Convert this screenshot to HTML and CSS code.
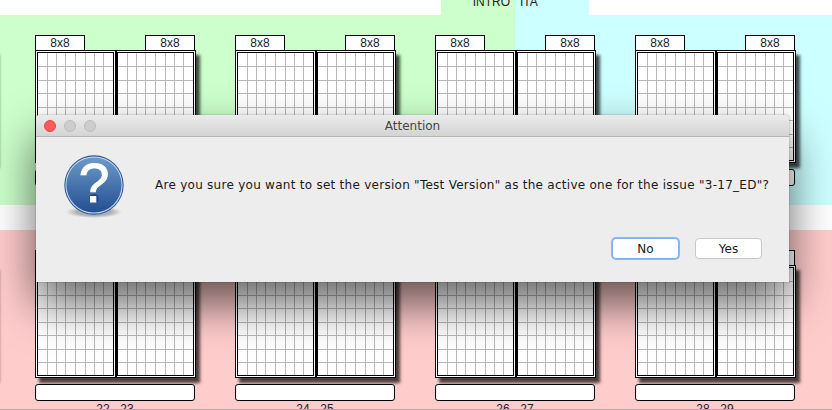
FILE: index.html
```html
<!DOCTYPE html>
<html lang="en">
<head>
    <meta charset="UTF-8">
    <title>Attention</title>
    <link rel="stylesheet" href="styles.css">
</head>
<body>

    <svg class="defs" width="0" height="0">
        <symbol id="grid" viewBox="0 0 77 109">
            <path class="grid-lines" d="M10.5 0V109M19.5 0V109M28.5 0V109M38.5 0V109M48.5 0V109M57.5 0V109M66.5 0V109M0 14.5H77M0 28.5H77M0 41.5H77M0 55.5H77M0 68.5H77M0 82.5H77M0 95.5H77"/>
            <rect class="grid-frame" x="0.5" y="0.5" width="76" height="108"/>
        </symbol>
    </svg>

    <!-- Section header -->
    <div class="topbar">
        <div class="topbar-cell intro">INTRO</div>
        <div class="topbar-cell ita">ITA</div>
    </div>

    <!-- Upper row -->
    <div class="section section-upper">
        <div class="spreads">
            <div class="spread spread-prev">
                <div class="pages">
                    <div class="page"><svg class="grid"><use href="#grid"/></svg></div>
                    <div class="page"><svg class="grid"><use href="#grid"/></svg></div>
                </div>
            </div>
            <div class="spread">
                <div class="tabs"><span class="tab">8x8</span><span class="tab">8x8</span></div>
                <div class="pages">
                    <div class="page"><svg class="grid"><use href="#grid"/></svg></div>
                    <div class="page"><svg class="grid"><use href="#grid"/></svg></div>
                </div>
                <div class="name"></div>
            </div>
            <div class="spread">
                <div class="tabs"><span class="tab">8x8</span><span class="tab">8x8</span></div>
                <div class="pages">
                    <div class="page"><svg class="grid"><use href="#grid"/></svg></div>
                    <div class="page"><svg class="grid"><use href="#grid"/></svg></div>
                </div>
                <div class="name"></div>
            </div>
            <div class="spread">
                <div class="tabs"><span class="tab">8x8</span><span class="tab">8x8</span></div>
                <div class="pages">
                    <div class="page"><svg class="grid"><use href="#grid"/></svg></div>
                    <div class="page"><svg class="grid"><use href="#grid"/></svg></div>
                </div>
                <div class="name"></div>
            </div>
            <div class="spread">
                <div class="tabs"><span class="tab">8x8</span><span class="tab">8x8</span></div>
                <div class="pages">
                    <div class="page"><svg class="grid"><use href="#grid"/></svg></div>
                    <div class="page"><svg class="grid"><use href="#grid"/></svg></div>
                </div>
                <div class="name"></div>
            </div>
        </div>
    </div>

    <div class="divider"></div>

    <!-- Lower row -->
    <div class="section section-lower">
        <div class="spreads">
            <div class="spread spread-prev">
                <div class="pages">
                    <div class="page"><svg class="grid"><use href="#grid"/></svg></div>
                    <div class="page"><svg class="grid"><use href="#grid"/></svg></div>
                </div>
            </div>
            <div class="spread">
                <div class="tabs"><span class="tab">8x8</span><span class="tab">8x8</span></div>
                <div class="pages">
                    <div class="page"><svg class="grid"><use href="#grid"/></svg></div>
                    <div class="page"><svg class="grid"><use href="#grid"/></svg></div>
                </div>
                <div class="name"></div>
                <div class="number">22 - 23</div>
            </div>
            <div class="spread">
                <div class="tabs"><span class="tab">8x8</span><span class="tab">8x8</span></div>
                <div class="pages">
                    <div class="page"><svg class="grid"><use href="#grid"/></svg></div>
                    <div class="page"><svg class="grid"><use href="#grid"/></svg></div>
                </div>
                <div class="name"></div>
                <div class="number">24 - 25</div>
            </div>
            <div class="spread">
                <div class="tabs"><span class="tab">8x8</span><span class="tab">8x8</span></div>
                <div class="pages">
                    <div class="page"><svg class="grid"><use href="#grid"/></svg></div>
                    <div class="page"><svg class="grid"><use href="#grid"/></svg></div>
                </div>
                <div class="name"></div>
                <div class="number">26 - 27</div>
            </div>
            <div class="spread">
                <div class="tabs"><span class="tab">8x8</span><span class="tab">8x8</span></div>
                <div class="pages">
                    <div class="page"><svg class="grid"><use href="#grid"/></svg></div>
                    <div class="page"><svg class="grid"><use href="#grid"/></svg></div>
                </div>
                <div class="name"></div>
                <div class="number">28 - 29</div>
            </div>
        </div>
    </div>

    <div class="footer-line"></div>

    <!-- Dialog -->
    <div class="dialog">
        <div class="titlebar">
            <div class="lights">
                <span class="light light-close"></span>
                <span class="light"></span>
                <span class="light"></span>
            </div>
            <div class="title">Attention</div>
        </div>
        <div class="dialog-body">
            <svg class="question" width="64" height="68" viewBox="0 0 64 68">
                <defs>
                    <radialGradient id="dropShadow" cx="0.5" cy="0.5" r="0.5">
                        <stop offset="0.6" stop-color="#000" stop-opacity="0.26"/>
                        <stop offset="1" stop-color="#000" stop-opacity="0"/>
                    </radialGradient>
                    <linearGradient id="ball" x1="0" y1="0" x2="0" y2="1">
                        <stop offset="0" stop-color="#6d9ac9"/>
                        <stop offset="1" stop-color="#234f92"/>
                    </linearGradient>
                </defs>
                <ellipse cx="32" cy="57" rx="28" ry="6" fill="url(#dropShadow)"/>
                <circle cx="32" cy="30" r="29.7" fill="#2b5a9c"/>
                <circle cx="32" cy="30" r="28.6" fill="#c9d8ea"/>
                <circle cx="32" cy="30" r="27.6" fill="url(#ball)"/>
                <circle cx="32" cy="43.5" r="4.6" fill="#1c4687"/>
                <text class="question-mark" x="32" y="47" text-anchor="middle">?</text>
            </svg>
            <div class="message">Are you sure you want to set the version "Test Version" as the active one for the issue "3-17_ED"?</div>
        </div>
        <div class="buttons">
            <button class="btn btn-focus" type="button">No</button>
            <button class="btn" type="button">Yes</button>
        </div>
    </div>

</body>
</html>
```

FILE: styles.css
```css
html, body {
    margin: 0;
    padding: 0;
}

body {
    position: relative;
    width: 832px;
    height: 410px;
    overflow: hidden;
    background-color: #fff;
    font-family: 'Liberation Sans', sans-serif;
    font-size: 12px;
    color: #222;
}

.defs {
    position: absolute;
}

/* top header */
.topbar {
    display: flex;
    width: 148px;
    height: 15px;
    margin-left: 441px;
    overflow: hidden;
    line-height: 4px;
}

.topbar-cell {
    width: 74px;
    box-sizing: border-box;
}

.intro {
    background-color: #ccffcc;
    text-align: right;
    padding-right: 5px;
}

.ita {
    background-color: #ccffff;
    padding-left: 5px;
}

/* rows of spreads */
.section {
    box-sizing: border-box;
    overflow: hidden;
    padding-top: 20px;
}

.section-upper {
    height: 190px;
    background: linear-gradient(90deg, #ccffcc 515px, #ccffff 515px);
}

.section-lower {
    height: 179px;
    background-color: #ffcccc;
}

.divider {
    height: 25px;
}

.footer-line {
    height: 1px;
    background-color: #aaa;
}

.spreads {
    display: flex;
    gap: 40px;
    margin-left: -165px;
}

.spread {
    flex: 0 0 160px;
    min-width: 0;
}

.spread-prev {
    padding-top: 15px;
}

.spread-prev .pages {
    width: 160px;
}

.tabs {
    display: flex;
    justify-content: space-between;
}

.tab {
    box-sizing: border-box;
    width: 50px;
    height: 16px;
    margin-bottom: -1px;
    background-color: #fff;
    border: 1px solid #000;
    text-align: center;
    line-height: 14px;
}

.pages {
    display: flex;
    width: 161px;
    box-shadow: 4px 5px 3px rgba(0, 0, 0, 0.7);
}

.page {
    box-sizing: border-box;
    display: flex;
    flex: none;
    width: 81px;
    height: 113px;
    padding: 1px;
    background-color: #fff;
    border: 1px solid #000;
}

.page + .page {
    width: 80px;
    padding-left: 0;
}

.grid {
    flex: none;
    width: 77px;
    height: 109px;
}

.grid-lines {
    fill: none;
    stroke: #b8b8b8;
    stroke-width: 1;
    shape-rendering: crispEdges;
}

.grid-frame {
    fill: none;
    stroke: #000;
    stroke-width: 1;
    shape-rendering: crispEdges;
}

.name {
    box-sizing: border-box;
    height: 17px;
    margin-top: 6px;
    background-color: #fff;
    border: 1px solid #000;
    border-radius: 3px;
}

.number {
    text-align: center;
    line-height: 14px;
    margin-top: 1px;
}

/* dialog */
.dialog {
    position: absolute;
    left: 36px;
    top: 115px;
    width: 753px;
    height: 167px;
    background-color: #ededed;
    box-shadow: 0 22px 46px rgba(0, 0, 0, 0.6), 0 0 2px rgba(0, 0, 0, 0.35);
    font-family: 'DejaVu Sans', sans-serif;
    border-radius: 4px 4px 0 0;
}

.titlebar {
    display: flex;
    align-items: center;
    position: relative;
    box-sizing: border-box;
    height: 22px;
    background: linear-gradient(#ebebeb, #d4d4d4);
    border-bottom: 1px solid #b4b4b4;
    border-radius: 4px 4px 0 0;
}

.lights {
    display: flex;
    gap: 8px;
    padding-left: 8px;
}

.light {
    box-sizing: border-box;
    width: 12px;
    height: 12px;
    border-radius: 50%;
    background-color: #cdcdcd;
    border: 1px solid #bdbdbd;
}

.light-close {
    background-color: #fc5b57;
    border-color: #e5453f;
}

.title {
    position: absolute;
    left: 0;
    right: 0;
    text-align: center;
    font-size: 12px;
    color: #444;
}

.dialog-body {
    display: flex;
    align-items: flex-start;
    padding: 18px 0 0 26px;
}

.question {
    flex: none;
}

.message {
    margin: 22px 0 0 29px;
    font-size: 12px;
    line-height: 16px;
    letter-spacing: 0.268px;
    color: #1a1a1a;
    white-space: nowrap;
}

.question-mark {
    font-family: 'Liberation Sans', sans-serif;
    font-size: 55px;
    fill: #fff;
    stroke: #fff;
    stroke-width: 1px;
}

.buttons {
    display: flex;
    justify-content: flex-end;
    gap: 16px;
    padding-right: 27px;
    margin-top: 15px;
}

.btn {
    box-sizing: border-box;
    width: 67px;
    height: 21px;
    padding: 0;
    background-color: #fff;
    border: 1px solid #c8c8c8;
    border-radius: 4px;
    font-family: 'DejaVu Sans', sans-serif;
    font-size: 12px;
    color: #1a1a1a;
}

.btn-focus {
    border: 1px solid #7eb1ef;
    box-shadow: 0 0 0 1px #8db9f1;
}
```
